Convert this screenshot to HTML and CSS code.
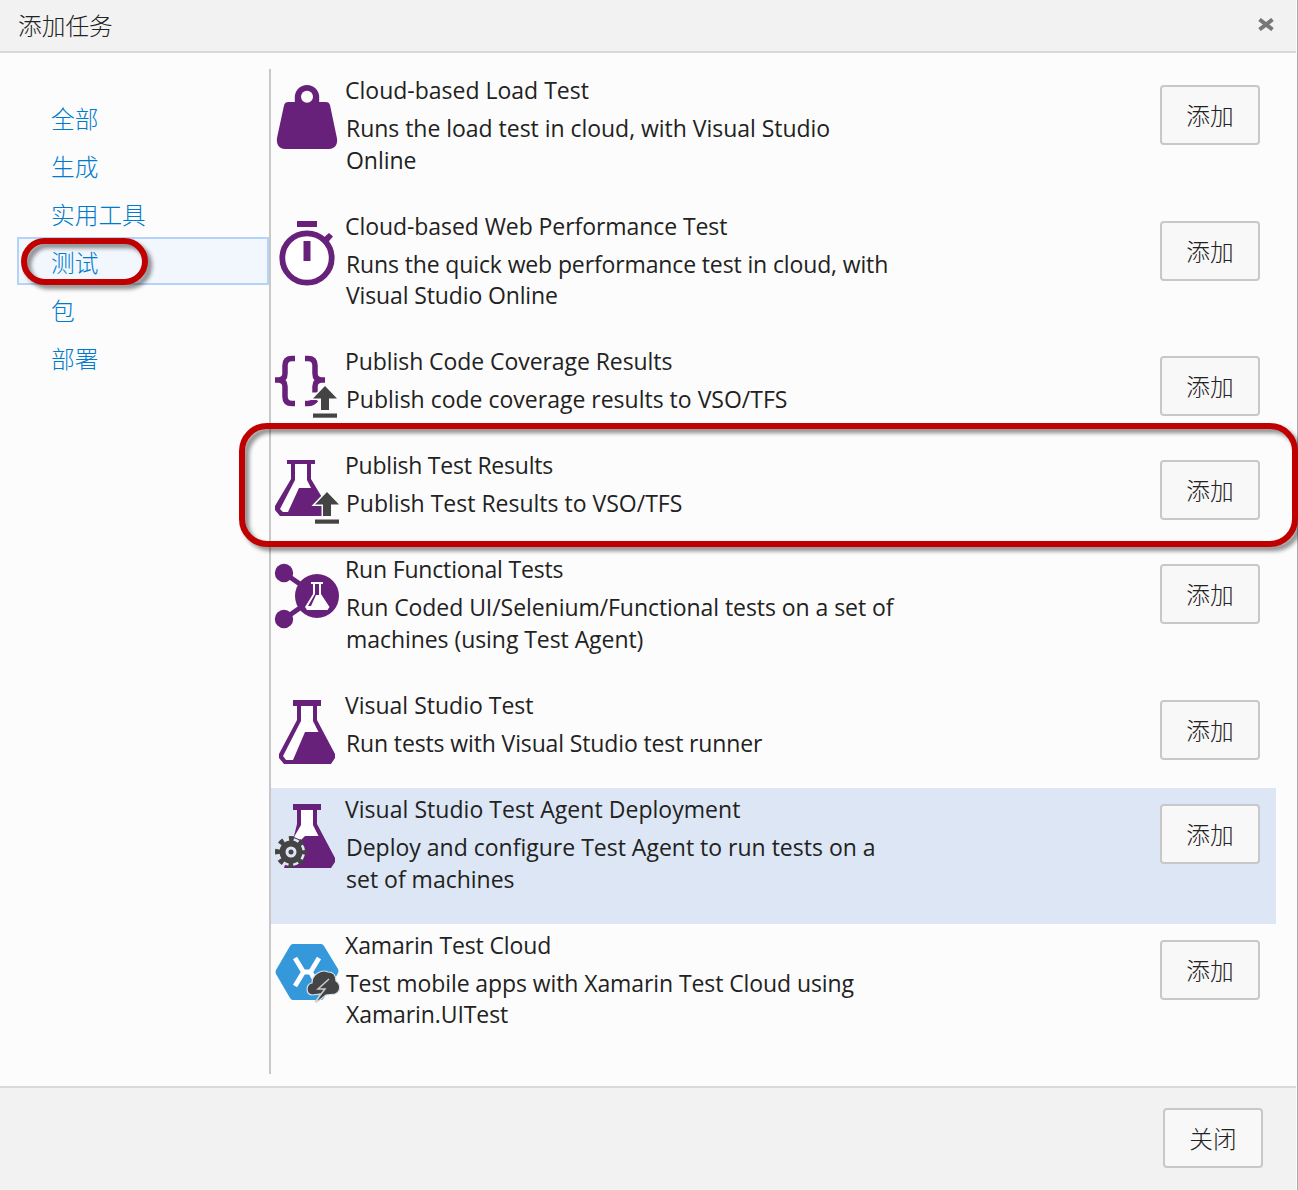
FILE: index.html
```html
<!DOCTYPE html>
<html lang="zh-CN">
<head>
<meta charset="utf-8">
<title>添加任务</title>
<link rel="stylesheet" href="styles.css">
</head>
<body>
<svg class="defs" width="0" height="0" aria-hidden="true">
  <symbol id="upload" viewBox="0 0 26 34" overflow="visible">
    <path d="M13 0 1 12.500h8V24h8V12.500h8z" fill="#444" stroke="#fcfcfc" stroke-width="3" paint-order="stroke"/><path d="M1 27.500h24v4.200H1z" fill="#444"/>
  </symbol>
</svg>
<div class="dialog">
  <header class="header"><h1>添加任务</h1>
    <svg class="close" viewBox="0 0 16 13"><path d="M1.500 1.500 14.500 11.500M14.500 1.500 1.500 11.500" stroke="#777" stroke-width="4"/></svg>
  </header>
  <main class="content">
    <nav class="nav">
      <a>全部</a><a>生成</a><a>实用工具</a><a class="selected">测试<span class="mark mark-nav"></span></a><a>包</a><a>部署</a>
    </nav>
    <ul class="tasks">
      <li class="task">
        <svg class="icon" viewBox="0 0 64 64"><path fill="#68217a" d="M19.800 17V12.200a12.200 12.200 0 0 1 24.400 0V17h6.400c2.500 0 3.900 1.100 4.500 3.500l6.600 31.500C63.500 59 60 64 54 64H10C4 64 .5 59 2.300 51.500L9 20.500c.6-2.400 2-3.500 4.500-3.500z"/><circle cx="32" cy="11.800" r="6" fill="#fcfcfc"/></svg>
        <div class="text"><h2>Cloud-based Load Test</h2><p>Runs the load test in cloud, with Visual Studio<br>Online</p></div><button>添加</button>
      </li>
      <li class="task">
        <svg class="icon" viewBox="0 0 64 64"><path fill="#68217a" d="M22 0h20v6H22zM47 18l7-6 4 3.500-6 7z"/><circle cx="32" cy="37" r="24.700" fill="#fff" stroke="#68217a" stroke-width="5.800"/><path fill="#68217a" d="M28.500 20h7v20h-7z"/></svg>
        <div class="text"><h2>Cloud-based Web Performance Test</h2><p>Runs the quick web performance test in cloud, with<br>Visual Studio Online</p></div><button>添加</button>
      </li>
      <li class="task">
        <svg class="icon" viewBox="0 0 64 64"><path d="M20 2.500h-3q-7 0-7 7v8q0 6.500-7 6.500H0h3q7 0 7 6.500v10q0 7 7 7h3M30 2.500h3q7 0 7 7v8q0 6.500 7 6.500h3h-3q-7 0-7 6.500v6M30 47.500h3q5 0 8-4" fill="none" stroke="#68217a" stroke-width="5.500"/><use href="#upload" x="37" y="30" width="26" height="34"/></svg>
        <div class="text"><h2>Publish Code Coverage Results</h2><p>Publish code coverage results to VSO/TFS</p></div><button>添加</button>
      </li>
      <li class="task">
        <svg class="icon" viewBox="0 0 64 64"><path fill="#68217a" d="M12 0h28v4h-4v15l12 20v17H5L0 50v-4l16-27V4h-4z"/><path fill="#fff" d="M20 4h12v16l4 8H24L13 52H8l-3-3 15-29z"/><use href="#upload" x="39" y="32" width="26" height="34"/></svg>
        <div class="text"><h2>Publish Test Results</h2><p>Publish Test Results to VSO/TFS</p></div><button>添加</button>
        <span class="mark mark-task"></span>
      </li>
      <li class="task">
        <svg class="icon" viewBox="0 0 64 64"><path d="M9 9 35 27M9 55 35 37" stroke="#68217a" stroke-width="5"/><g fill="#68217a"><circle cx="9" cy="9" r="9.200"/><circle cx="9" cy="55" r="9.200"/><circle cx="42" cy="32" r="22"/></g><path fill="#fff" d="M36 18h12v2h-2v10l8.500 13-2 3H32l-2-3 8-13V20h-2z"/><path fill="#68217a" d="M40 20h4v11h-3l-5 11h-3l7-12z"/></svg>
        <div class="text"><h2>Run Functional Tests</h2><p>Run Coded UI/Selenium/Functional tests on a set of<br>machines (using Test Agent)</p></div><button>添加</button>
      </li>
      <li class="task">
        <svg class="icon" viewBox="0 0 64 64"><path fill="#68217a" d="M18 0h28v6h-4v14l18 34v4l-4 6H9l-5-6v-4l18-34V6h-4z"/><path fill="#fff" d="M26 6h12v15l5.500 11H30L18 60h-7l-3-4 18-35z"/></svg>
        <div class="text"><h2>Visual Studio Test</h2><p>Run tests with Visual Studio test runner</p></div><button>添加</button>
      </li>
      <li class="task hover">
        <svg class="icon" viewBox="0 0 64 64"><path fill="#68217a" d="M18 0h28v6h-4v14l18 34v4l-4 6H9l10-32 3-12V6h-4z"/><path fill="#fff" d="M26 6h12v15l5.500 11H30l-4 4-7-3 7-12z"/><circle cx="16" cy="48" r="14" fill="#dce6f4"/><circle cx="16" cy="48" r="8.500" fill="none" stroke="#444" stroke-width="6"/><circle cx="16" cy="48" r="13.500" fill="none" stroke="#444" stroke-width="5" stroke-dasharray="5 5.603" stroke-dashoffset="2.500"/><circle cx="16" cy="48" r="2.500" fill="#444"/></svg>
        <div class="text"><h2>Visual Studio Test Agent Deployment</h2><p>Deploy and configure Test Agent to run tests on a<br>set of machines</p></div><button>添加</button>
      </li>
      <li class="task">
        <svg class="icon" viewBox="0 0 64 64"><path fill="#3498db" d="M18 4h28q2 0 3 2l14 23q1 2 0 4L49 58q-1 2-3 2H18q-2 0-3-2L1 34q-1-2 0-4L15 6q1-2 3-2z"/><path d="M20 18l8.500 14L20 46M44 18l-8.500 14 5 9M28 32h8" fill="none" stroke="#fff" stroke-width="4.800"/><path fill="#444" stroke="#d8e3ea" stroke-width="1.200" d="M37 55c-7-1-6-11 0-12 0-9 10-14 16-11 6 0 8 4 8 9 5 3 5 11-1 13l-9 1-10 8 4-9z"/><path d="M54 39 43 49h7L40 62" fill="none" stroke="#c8cdd0" stroke-width="1.500"/></svg>
        <div class="text"><h2>Xamarin Test Cloud</h2><p>Test mobile apps with Xamarin Test Cloud using<br>Xamarin.UITest</p></div><button>添加</button>
      </li>
    </ul>
  </main>
  <footer class="footer"><button>关闭</button></footer>
</div>
</body>
</html>
```
FILE: styles.css
```css
* { box-sizing: border-box; }
body { margin: 0; overflow: hidden; background: #fcfcfc; color: #222; font-family: "Open Sans", "Noto Sans CJK SC", sans-serif; font-size: 23px; }
h1, h2, p, ul { margin: 0; padding: 0; font-weight: 400; }
.defs { position: absolute; }
.dialog { height: 1190px; display: flex; flex-direction: column; border-right: 1px solid #aaa; padding-right: 1px; }
.header { height: 53px; flex: none; display: flex; align-items: center; justify-content: space-between; padding: 0 22px 0 18px; background: #f2f2f2; border-bottom: 2px solid #d9d9d9; }
h1, .nav, button { font-family: "Noto Sans CJK SC", sans-serif; font-weight: 300; font-size: 23.7px; }
h1 { line-height: 50px; padding-bottom: 2px; }
.close { width: 16px; height: 13px; margin-bottom: 2px; }
.content { height: 1033px; flex: none; display: flex; padding: 16px 20px 12px 17px; }
.nav { width: 252px; flex: none; padding-top: 24px; color: #007acc; }
.nav a { position: relative; display: block; height: 48px; padding-left: 34px; line-height: 51px; }
.nav .selected { border: 2px solid #b4d3f8; background: #f2f7fe; padding-left: 32px; line-height: 47px; }
.tasks { flex: 1; list-style: none; border-left: 2px solid #c8c8c8; }
.task { position: relative; display: flex; align-items: flex-start; padding: 6px 16px 28.500px 4px; }
.hover { background: #dce6f4; }
.icon { width: 64px; height: 64px; margin: 10px 0 -10px; overflow: visible; flex: none; }
.text { flex: 1; padding-left: 6px; white-space: nowrap; }
h2 { font-size: 23px; line-height: 30.500px; }
p { margin: 7.300px 0 0 1px; line-height: 31.700px; }
.task:nth-child(1) p { letter-spacing: -.03px; }
.task:nth-child(2) h2 { letter-spacing: -.07px; }
.task:nth-child(2) p { letter-spacing: -.13px; }
.task:nth-child(3) h2 { letter-spacing: -.07px; }
.task:nth-child(4) h2 { letter-spacing: -.23px; }
.task:nth-child(5) h2 { letter-spacing: -.17px; }
.task:nth-child(5) p { letter-spacing: -.06px; }
.task:nth-child(6) p { letter-spacing: -.13px; }
.task:nth-child(7) h2 { letter-spacing: .04px; }
.task:nth-child(8) h2 { letter-spacing: -.13px; }
.task:nth-child(8) p { letter-spacing: -.09px; }
button { width: 100px; height: 60px; flex: none; padding: 0; border: 2px solid #c8c8c8; border-radius: 4px; background: #f8f8f8; color: #222; }
.task button { margin-top: 10px; margin-bottom: -10px; }
.footer { flex: 1; display: flex; justify-content: flex-end; align-items: flex-start; padding: 20px 33px 0 0; background: #f2f2f2; border-top: 2px solid #d9d9d9; }
.mark { position: absolute; z-index: 2; border: 6px solid #c00000; filter: drop-shadow(4px 4px 2px rgba(0, 0, 0, .45)); }
.mark-nav { left: 2px; top: -1px; width: 127px; height: 47px; border-radius: 24px; }
.mark-task { left: -32px; top: -21px; width: 1059px; height: 124px; border-radius: 28px; }
```
